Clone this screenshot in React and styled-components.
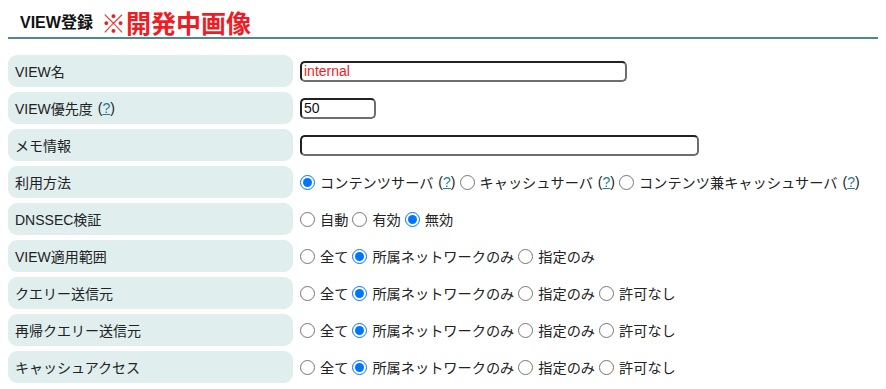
import React from "react";
import styled, { createGlobalStyle } from "styled-components";

const GlobalStyle = createGlobalStyle`
  body {
    margin: 8px;
    background: #fff;
    font-family: "Liberation Sans", Arial, "Noto Sans CJK JP", sans-serif;
    color: #222;
  }
`;

const Header = styled.div`
  display: flex;
  align-items: flex-end;
  height: 29px;
  padding-left: 12px;
  border-bottom: 2px solid #4f8a8b;
`;

const Title = styled.h2`
  margin: 0 0 5px;
  font-size: 16px;
  line-height: 18px;
  font-weight: bold;
  color: #111;
`;

const Notice = styled.span`
  margin: 0 0 2px 8px;
  font-family: "Noto Sans CJK JP", sans-serif;
  font-size: 25px;
  line-height: 25px;
  font-weight: bold;
  color: #f01c24;
`;

const Form = styled.div`
  display: grid;
  grid-template-columns: 285px 1fr;
  row-gap: 5px;
  margin-top: 16px;
`;

const Label = styled.div`
  display: flex;
  align-items: center;
  height: 32px;
  padding-left: 7px;
  background: #e0eeee;
  border-radius: 9px;
  font-family: "Liberation Sans", Arial, "Noto Sans CJK JP", sans-serif;
  font-size: 14px;
  color: #222;
`;

const Value = styled.div`
  display: flex;
  align-items: center;
  padding-left: 7px;
  font-family: "Noto Sans CJK JP", sans-serif;
  font-size: 14.2px;
  color: #222;
  white-space: nowrap;
`;

const TextBox = styled.input`
  box-sizing: border-box;
  width: ${(p) => p.$w}px;
  height: 21px;
  margin: 0;
  padding: 0 2px;
  border: 2px solid #222;
  border-right-color: #6e6e6e;
  border-bottom-color: #6e6e6e;
  border-radius: 5px;
  font-family: "Liberation Sans", Arial, sans-serif;
  font-size: 14px;
  color: ${(p) => p.$color || "#111"};
  outline: none;
`;

const Radio = styled.input`
  width: 15px;
  height: 15px;
  margin: 0 5px 0 ${(p) => (p.$first ? 0 : 4)}px;
`;

const Help = styled.span`
  margin-left: 5px;
  font-family: "Liberation Sans", Arial, sans-serif;
  font-size: 14px;
  color: #222;

  a {
    color: #2a7a9a;
    text-decoration: underline;
  }
`;

const HelpMark = () => (
  <Help>
    (<a href="#">?</a>)
  </Help>
);

const RadioGroup = ({ name, options, checked }) => (
  <Value>
    {options.map((opt, i) => (
      <React.Fragment key={opt.label}>
        <Radio
          type="radio"
          name={name}
          $first={i === 0}
          defaultChecked={i === checked}
        />
        {opt.label}
        {opt.help && <HelpMark />}
      </React.Fragment>
    ))}
  </Value>
);

const scope = [
  { label: "全て" },
  { label: "所属ネットワークのみ" },
  { label: "指定のみ" },
];
const access = [...scope, { label: "許可なし" }];

const App = () => (
  <>
    <GlobalStyle />
    <Header>
      <Title>VIEW登録</Title>
      <Notice>※開発中画像</Notice>
    </Header>
    <Form>
      <Label>VIEW名</Label>
      <Value>
        <TextBox $w={327} $color="#f01c24" defaultValue="internal" />
      </Value>

      <Label>
        VIEW優先度
        <HelpMark />
      </Label>
      <Value>
        <TextBox $w={76} defaultValue="50" />
      </Value>

      <Label>メモ情報</Label>
      <Value>
        <TextBox $w={399} defaultValue="" />
      </Value>

      <Label>利用方法</Label>
      <RadioGroup
        name="usage"
        checked={0}
        options={[
          { label: "コンテンツサーバ", help: true },
          { label: "キャッシュサーバ", help: true },
          { label: "コンテンツ兼キャッシュサーバ", help: true },
        ]}
      />

      <Label>DNSSEC検証</Label>
      <RadioGroup
        name="dnssec"
        checked={2}
        options={[{ label: "自動" }, { label: "有効" }, { label: "無効" }]}
      />

      <Label>VIEW適用範囲</Label>
      <RadioGroup name="scope" checked={1} options={scope} />

      <Label>クエリー送信元</Label>
      <RadioGroup name="query" checked={1} options={access} />

      <Label>再帰クエリー送信元</Label>
      <RadioGroup name="recursive" checked={1} options={access} />

      <Label>キャッシュアクセス</Label>
      <RadioGroup name="cache" checked={1} options={access} />
    </Form>
  </>
);

export default App;
